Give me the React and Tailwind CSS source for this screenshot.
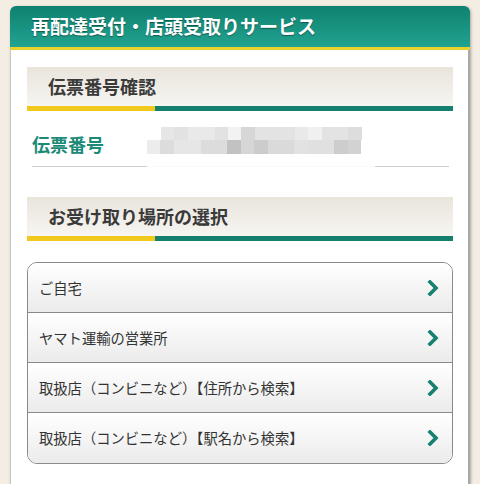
import React from 'react';

const font = { fontFamily: '"Noto Sans CJK JP", "Noto Sans", sans-serif' };

// mosaic blur of the slip number
const mosaicTop = ['#e6e6e6', '#e2e2e2', '#e9e9e9', '#e9e9e9', '#e2e2e2', '#f2f2f2', '#d6d6d6', '#e3e3e3', '#e3e3e3', '#e3e3e3', '#e9e9e9', '#f0f0f0', '#e3e3e3', '#e3e3e3', '#dddddd'];
const mosaicBottom = ['#ececec', '#dcdcdc', '#e6e6e6', '#e6e6e6', '#dcdcdc', '#dcdcdc', '#c2c2c2', '#d6d6d6', '#cccccc', '#dadada', '#dadada', '#e2e2e2', '#e0e0e0', '#e0e0e0', '#cdcdcd', '#d2d2d2'];

const places = [
  'ご自宅',
  'ヤマト運輸の営業所',
  '取扱店（コンビニなど）【住所から検索】',
  '取扱店（コンビニなど）【駅名から検索】',
];

function SectionTitle({ children }) {
  return (
    <div>
      <div className="h-[39px] flex items-center pl-[21px] bg-gradient-to-b from-[#e9e5dd] to-[#f7f5f1] text-[18px] font-bold text-[#3a3a3a]">
        {children}
      </div>
      <div className="flex h-[5px]">
        <div className="w-[128px] bg-[#f1c81c]" />
        <div className="flex-1 bg-[#15806e]" />
      </div>
    </div>
  );
}

function Chevron() {
  return (
    <svg width="12" height="16" viewBox="0 0 12 16">
      <polyline points="3,2 9,8 3,14" fill="none" stroke="#17806f" strokeWidth="3.6" strokeLinecap="square" />
    </svg>
  );
}

export default function App() {
  return (
    <div className="w-[480px] h-[484px] overflow-hidden bg-[#f3ede3] pt-[6px] px-[10px]" style={font}>
      <div className="rounded-t-[6px] overflow-hidden shadow-[1px_1px_3px_rgba(0,0,0,0.3)]">
        <div className="h-[41px] flex items-center pl-[21px] bg-gradient-to-b from-[#0d8270] to-[#22a290] text-white text-[19px] font-bold [text-shadow:0_1px_1px_rgba(0,0,0,0.4)]">
          再配達受付・店頭受取りサービス
        </div>
        <div className="h-[3px] bg-[#e8d12c]" />
        <div className="bg-white border-l border-[#c8c8c8] border-r-2 border-r-[#a8a8a8] pl-[16px] pr-[15px] pt-[17px] pb-[30px]">
          <SectionTitle>伝票番号確認</SectionTitle>

          <div className="flex pt-[16px] pl-[5px]">
            <div className="w-[115px] pt-[8px] text-[18px] leading-[18px] font-bold text-[#1d8a78]">伝票番号</div>
            <div className="flex flex-col">
              <div className="flex pl-[14px]">
                {mosaicTop.map((c, i) => (
                  <div key={i} className="w-[13.4px] h-[13px]" style={{ background: c }} />
                ))}
              </div>
              <div className="flex">
                {mosaicBottom.map((c, i) => (
                  <div key={i} className="w-[13.4px] h-[14px]" style={{ background: c }} />
                ))}
              </div>
            </div>
          </div>
          <div className="flex h-[1px] mt-[12px] ml-[5px] mr-[4px]">
            <div className="w-[115px] bg-[#cfcfcf]" />
            <div className="w-[228px] bg-[#fafafa]" />
            <div className="flex-1 bg-[#cfcfcf]" />
          </div>

          <div className="mt-[30px]">
            <SectionTitle>お受け取り場所の選択</SectionTitle>
          </div>

          <div className="mt-[21px] border border-[#8a8a8a] rounded-[10px] overflow-hidden">
            {places.map((p, i) => (
              <div
                key={p}
                className={`h-[50px] flex items-center justify-between pl-[11px] pr-[13px] bg-gradient-to-b from-white to-[#ebebeb] text-[14.3px] text-[#333] ${i < places.length - 1 ? 'border-b border-[#8a8a8a]' : ''}`}
              >
                <span>{p}</span>
                <Chevron />
              </div>
            ))}
          </div>
        </div>
      </div>
    </div>
  );
}
